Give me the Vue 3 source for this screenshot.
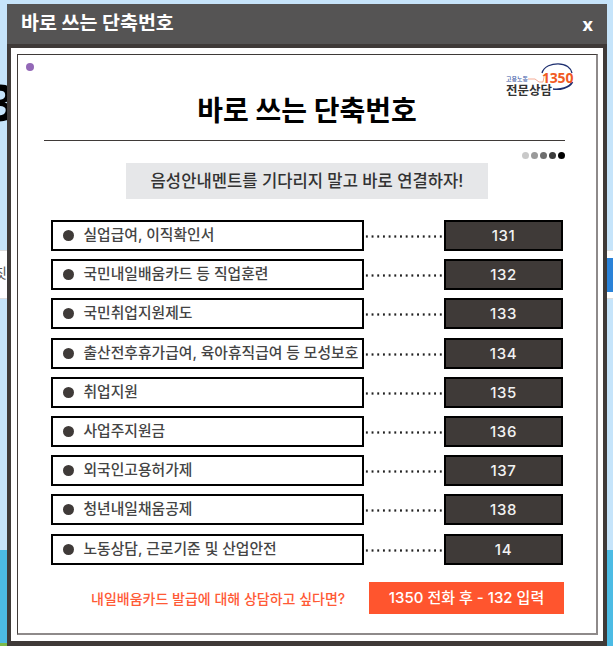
<script setup>
const rows = [
  { label: '실업급여, 이직확인서', num: '131' },
  { label: '국민내일배움카드 등 직업훈련', num: '132' },
  { label: '국민취업지원제도', num: '133' },
  { label: '출산전후휴가급여, 육아휴직급여 등 모성보호', num: '134' },
  { label: '취업지원', num: '135' },
  { label: '사업주지원금', num: '136' },
  { label: '외국인고용허가제', num: '137' },
  { label: '청년내일채움공제', num: '138' },
  { label: '노동상담, 근로기준 및 산업안전', num: '14' }
]
const dots = ['#c9c9c9', '#9a9a9a', '#6e6e6e', '#3c3c3c', '#000000']
</script>

<template>
  <div class="page">
    <div class="bg">
      <span class="bg-big">3</span>
      <div class="band"><span class="band-text">칫</span><span class="band-btn"></span></div>
      <div class="sea"></div>
      <div class="grass"></div>
    </div>
    <div class="modal">
      <header class="bar">
        <span class="bar-title">바로 쓰는 단축번호</span>
        <span class="bar-x">x</span>
      </header>
      <div class="body">
        <div class="frame">
          <span class="purple"></span>
          <div class="logo">
            <svg width="70" height="36" viewBox="0 0 70 36">
              <path d="M36 10 C38 3 46 0.8 52 0.8 C60 0.8 65 5 66 10" fill="none" stroke="#1d2f6f" stroke-width="1.3"/>
              <path d="M47 26 C54 27 63 25 66.5 19" fill="none" stroke="#1d2f6f" stroke-width="1.7"/>
              <path d="M22 16 H29 L33 19 H37 L38 14" fill="none" stroke="#f08a6a" stroke-width="0.7"/>
              <text x="0" y="18" class="logo-small">고용노동</text>
              <text x="36" y="20" class="logo-num">1350</text>
              <text x="0" y="32" class="logo-main">전문상담</text>
            </svg>
          </div>
          <h1 class="title">바로 쓰는 단축번호</h1>
          <div class="rule"></div>
          <div class="dots">
            <i v-for="c in dots" :key="c" :style="{ background: c }"></i>
          </div>
          <div class="sub">음성안내멘트를 기다리지 말고 바로 연결하자!</div>
          <ul class="list">
            <li v-for="r in rows" :key="r.num" class="row">
              <div class="label"><b class="bullet"></b><span class="label-text">{{ r.label }}</span></div>
              <div class="leader"></div>
              <div class="num">{{ r.num }}</div>
            </li>
          </ul>
          <div class="foot">
            <span class="foot-q">내일배움카드 발급에 대해 상담하고 싶다면?</span>
            <span class="foot-btn">1350 전화 후 - 132 입력</span>
          </div>
        </div>
      </div>
    </div>
  </div>
</template>

<style>
html, body { margin: 0; padding: 0; }
</style>

<style scoped>
.page {
  position: relative;
  width: 613px;
  height: 646px;
  overflow: hidden;
  background: #c6e4fa;
  font-family: Inter, "Noto Sans CJK KR", sans-serif;
}
.bg { position: absolute; inset: 0; }
.bg-big {
  position: absolute; left: -13px; top: 72px;
  font: 700 50px/60px "Noto Sans", sans-serif; color: #000;
}
.band {
  position: absolute; left: 0; right: 0; top: 250px; height: 49px;
  background: #fff; border-top: 1px solid #ddd; border-bottom: 1px solid #ddd;
  box-sizing: border-box;
}
.band-text { position: absolute; left: -6px; top: 11px; font-size: 14px; color: #555; }
.band-btn { position: absolute; right: 0; top: 7px; width: 6px; height: 34px; background: #2a82d8; }
.sea { position: absolute; left: 0; right: 0; top: 550px; bottom: 0; background: #4cbbe4; }
.grass { position: absolute; left: 0; width: 8px; top: 643px; height: 3px; background: #7cba4a; }
.modal {
  position: absolute; left: 7px; top: 4px; width: 600px; height: 642px;
  display: flex; flex-direction: column;
  background: #3f3a38;
}
.bar {
  height: 40px; flex: none; background: #555454;
  display: flex; align-items: center; justify-content: space-between;
  padding: 0 14px 0 14px; color: #fff; font-weight: 700;
}
.bar-title { font-size: 19.5px; line-height: 24px; margin-top: -3px; }
.bar-x { font: 700 18px/24px "Noto Sans", sans-serif; }
.body {
  flex: 1; margin: 4px 4px 5px 4px; background: #fff;
  padding: 6px 5px 6px 6px; display: flex; min-height: 0;
}
.frame {
  position: relative; flex: 1; box-sizing: border-box;
  border-top: 1px solid #3f3a38; border-left: 1px solid #3f3a38;
  border-right: 2px solid #8e8a8a; border-bottom: 2px solid #8e8a8a;
  display: flex; flex-direction: column; align-items: stretch;
}
.purple {
  position: absolute; left: 8px; top: 8px; width: 8px; height: 8px;
  border-radius: 50%; background: #9368b7;
}
.logo { position: absolute; right: 20px; top: 8px; width: 70px; height: 36px; }
.logo svg { display: block; }
.logo-small { font-size: 6px; font-weight: 500; fill: #3d5aa8; }
.logo-num { font-size: 14px; font-weight: 700; fill: #f15a22; font-family: "Noto Sans", sans-serif; letter-spacing: -0.2px; }
.logo-main { font-size: 12.5px; font-weight: 700; fill: #333; }
.title {
  margin: 34px 0 0; text-align: center; font-size: 28px; line-height: 44px;
  font-weight: 700; color: #000;
}
.rule { height: 1px; background: #3f3a38; margin: 7px 31px 0 26px; }
.dots { display: flex; justify-content: flex-end; gap: 2px; margin: 11px 31px 0 0; }
.dots i { width: 7px; height: 7px; border-radius: 50%; display: block; }
.sub {
  align-self: flex-start; margin: 4px 0 0 108px; width: 362px; height: 36px;
  background: #e6e7e9; text-align: center; font-size: 16.6px; line-height: 36px;
  font-weight: 500; color: #333; white-space: nowrap;
}
.list { list-style: none; margin: 21px 0 0 33px; padding: 0; display: flex; flex-direction: column; gap: 8.2px; }
.row { display: flex; align-items: center; height: 31px; width: 512px; }
.label {
  box-sizing: border-box; width: 313px; height: 31px; flex: none;
  border: 2.5px solid #000; display: flex; align-items: center; padding-left: 10px;
  gap: 9.5px; font-size: 14.8px; font-weight: 500; color: #444; white-space: nowrap; overflow: hidden;
}
.label-text { line-height: 20px; margin-top: -1px; }
.bullet { width: 11px; height: 11px; border-radius: 50%; background: #3f3a38; flex: none; }
.leader {
  flex: 1; height: 3px; margin: 2px 0 0 0;
  background-image: radial-gradient(circle, #222 1px, transparent 1.3px);
  background-size: 5.7px 3px; background-repeat: repeat-x;
}
.num {
  box-sizing: border-box; width: 119px; height: 31px; flex: none;
  background: #3f3a38; border: 2.5px solid #000; color: #f2f2f2;
  font: 500 15px/27px Inter, sans-serif; text-align: center; letter-spacing: .6px;
}
.foot { display: flex; align-items: center; margin: 17px 0 0 73px; }
.foot-q { width: 278px; font-size: 14px; font-weight: 500; color: #ff5a36; white-space: nowrap; }
.foot-btn {
  width: 195px; height: 32px; background: #ff552e; color: #fff;
  text-align: center; font-size: 15px; font-weight: 500; line-height: 31px; white-space: nowrap;
}
</style>
